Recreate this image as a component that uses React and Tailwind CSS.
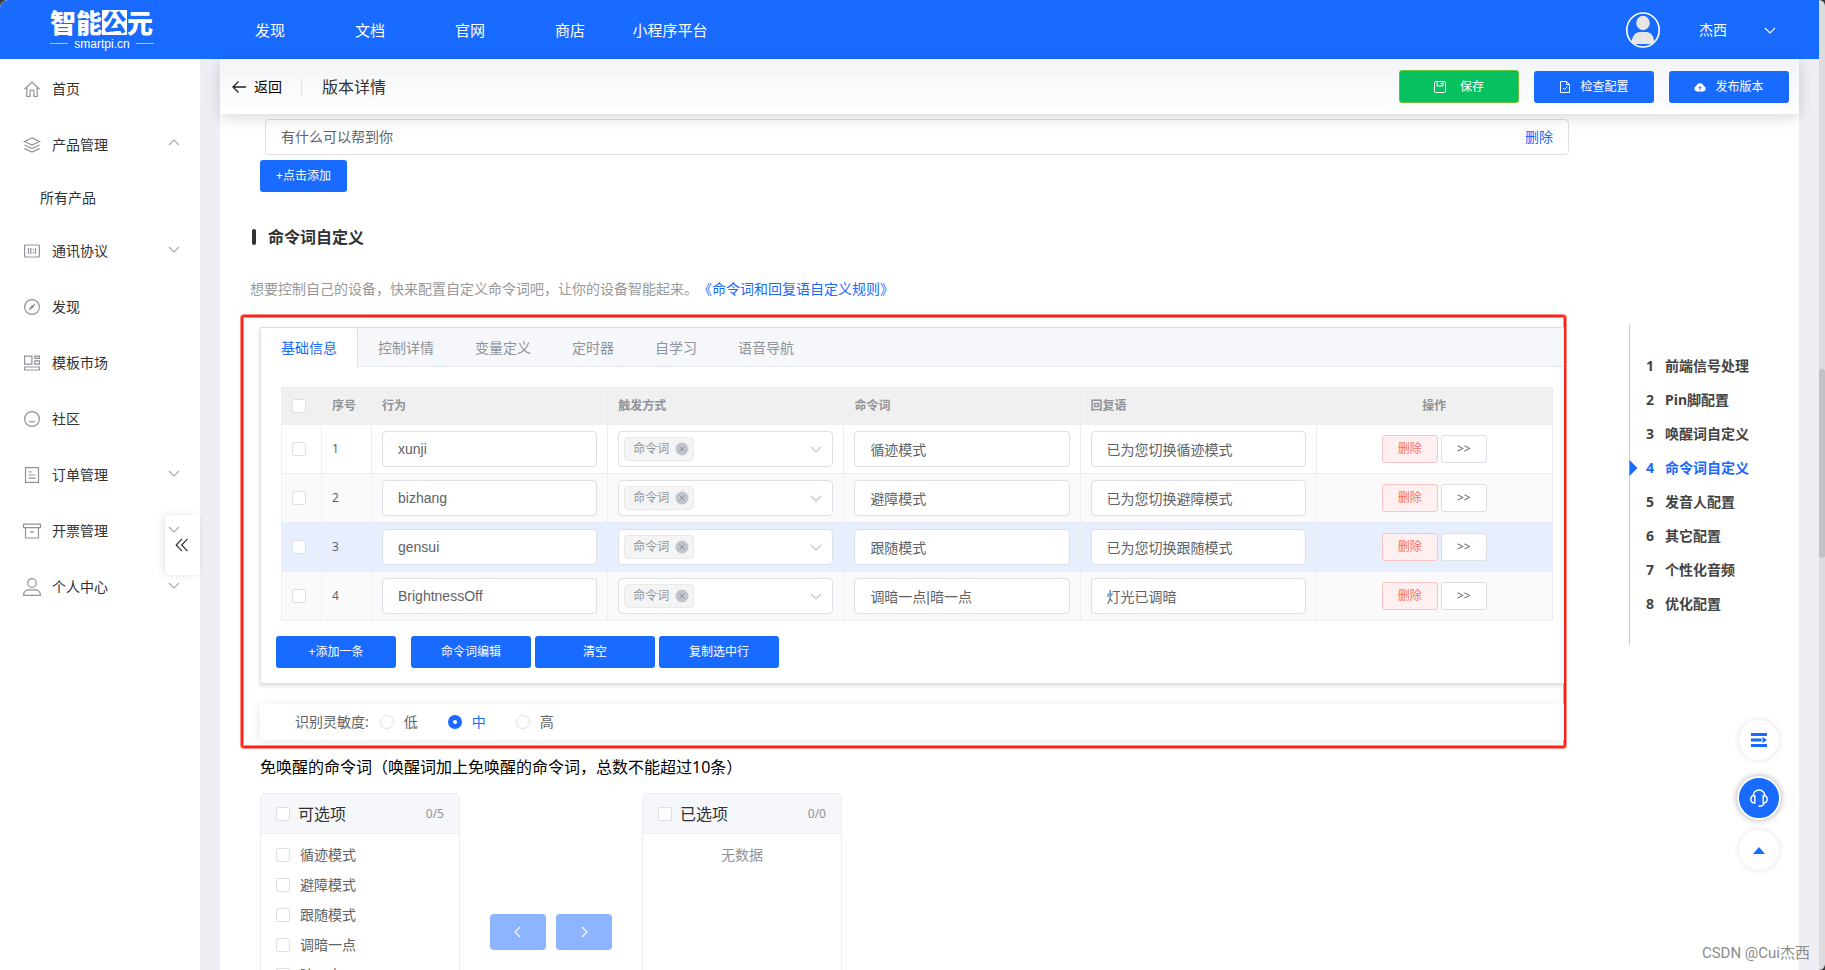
// src/App.jsx
import React, { useState } from 'react';

const topLinks = ['发现', '文档', '官网', '商店', '小程序平台'];

const sideMenu = [
  { key: 'home', label: '首页' },
  { key: 'product', label: '产品管理', arrow: 'up', children: ['所有产品'] },
  { key: 'protocol', label: '通讯协议', arrow: 'down' },
  { key: 'discover', label: '发现' },
  { key: 'market', label: '模板市场' },
  { key: 'community', label: '社区' },
  { key: 'order', label: '订单管理', arrow: 'down' },
  { key: 'invoice', label: '开票管理', arrow: 'down' },
  { key: 'user', label: '个人中心', arrow: 'down' },
];

const tabs = ['基础信息', '控制详情', '变量定义', '定时器', '自学习', '语音导航'];

const commands = [
  { action: 'xunji', words: '循迹模式', reply: '已为您切换循迹模式' },
  { action: 'bizhang', words: '避障模式', reply: '已为您切换避障模式' },
  { action: 'gensui', words: '跟随模式', reply: '已为您切换跟随模式' },
  { action: 'BrightnessOff', words: '调暗一点|暗一点', reply: '灯光已调暗' },
];

const anchors = [
  '前端信号处理',
  'Pin脚配置',
  '唤醒词自定义',
  '命令词自定义',
  '发音人配置',
  '其它配置',
  '个性化音频',
  '优化配置',
];

const levels = ['低', '中', '高'];

const wakeFree = ['循迹模式', '避障模式', '跟随模式', '调暗一点', '暗一点'];

const Chevron = ({ dir = 'down', className = '' }) => {
  const d = {
    down: 'M1 4l5 5 5-5',
    up: 'M1 8l5-5 5 5',
    left: 'M8 1L3 6l5 5',
    right: 'M4 1l5 5-5 5',
  }[dir];
  return (
    <svg viewBox="0 0 12 12" fill="none" stroke="currentColor" strokeWidth="1.1" className={className} aria-hidden="true">
      <path d={d} />
    </svg>
  );
};

// 侧边栏图标
const menuIcons = {
  home: <path d="M.5 8.200L8 1l7.500 7.200M2.800 6.800v8.700h3.200v-4.700a2 2 0 0 1 4 0v4.700h3.200V6.800" />,
  product: (
    <>
      <path d="M8 .9l7.600 3.600L8 8.100.4 4.500z" />
      <path d="M.4 8L8 11.500 15.600 8M.4 11.400L8 15l7.600-3.600" />
    </>
  ),
  protocol: (
    <>
      <rect x="0.6" y="2" width="14.8" height="12" rx="1" />
      <path d="M4.5 5v6M6.800 5v6M11.5 5v6M9.200 6v1.200M9.200 9v1.200" />
    </>
  ),
  discover: (
    <>
      <circle cx="8" cy="8" r="7.4" />
      <path d="M11.800 4.200L9 9l-4.800 2.800L7 7z" fill="currentColor" stroke="none" />
    </>
  ),
  market: (
    <path d="M.6 1.100h7.300v8H.6zM10.800 1.100h4.600v2.300h-4.600zM10.800 5.800h4.600v3.300h-4.600zM.6 12h14.800v3H.6z" />
  ),
  community: (
    <>
      <circle cx="8" cy="8" r="7.4" />
      <path d="M5.200 9.800c1.200 1.500 4.400 1.500 5.600 0" />
    </>
  ),
  order: <path d="M1.500.6h13v14.800h-13zM4.500 4.800h3M4.500 8h7M4.500 11.200h7" />,
  invoice: <path d="M-.4 1.200h16.800v3.400H-.4zM1.500 4.600h13v10.400h-13zM6 8.800h4" />,
  user: (
    <>
      <circle cx="8" cy="4" r="4.300" />
      <path d="M-.4 16.400c0-3.800 2.700-5.500 5.200-5.500h6.400c2.500 0 5.200 1.700 5.200 5.500z" />
    </>
  ),
};

const MenuIcon = ({ name }) => (
  <svg
    viewBox="0 0 16 16"
    fill="none"
    stroke="currentColor"
    strokeWidth="1.2"
    className="size-4 shrink-0 overflow-visible text-[#909399]"
    aria-hidden="true"
  >
    {menuIcons[name]}
  </svg>
);

const Checkbox = ({ label }) => (
  <input
    type="checkbox"
    aria-label={label}
    className="block size-[14px] shrink-0 appearance-none rounded-[2px] border border-[#dcdfe6] bg-white checked:border-[#196aff] checked:bg-[#196aff]"
  />
);

const BlueButton = ({ children, className = 'w-[120px]' }) => (
  <button
    type="button"
    className={`flex h-8 shrink-0 items-center justify-center rounded-[3px] bg-[#196aff] text-xs text-white ${className}`}
  >
    {children}
  </button>
);

const TextField = ({ label, value }) => (
  <input
    type="text"
    aria-label={label}
    defaultValue={value}
    className="block h-9 w-full rounded border border-[#dcdfe6] bg-white px-[15px] font-['Liberation_Sans','Noto_Sans_CJK_SC',sans-serif] text-sm text-[#606266] outline-none"
  />
);

const TriggerSelect = ({ label }) => (
  <div className="relative">
    <select
      aria-label={label}
      className="block h-9 w-full appearance-none rounded border border-[#dcdfe6] bg-white px-[15px] text-transparent outline-none"
    >
      <option>命令词</option>
    </select>
    <span className="absolute top-[6px] left-[6px] flex h-6 w-[70px] items-center gap-[6px] rounded border border-[#e9e9eb] bg-[#f4f4f5] pl-2 text-xs text-[#909399]">
      命令词
      <svg viewBox="0 0 14 14" className="size-[14px]" aria-hidden="true">
        <circle cx="7" cy="7" r="6.5" fill="#c0c4cc" />
        <path d="M4.500 4.500l5 5M9.500 4.500l-5 5" stroke="#909399" />
      </svg>
    </span>
    <Chevron className="pointer-events-none absolute top-3 right-[11px] size-3 text-[#c0c4cc]" />
  </div>
);

const Header = () => (
  <header className="flex h-[59px] shrink-0 items-center rounded-tl-lg bg-[#196aff] text-white">
    <a href="#" className="ml-[50px] flex w-[104px] shrink-0 flex-col">
      <span className="flex h-7 items-center text-[26px] leading-7 font-black whitespace-nowrap">
        智能
        <span className="block size-[25px] shrink-0 bg-white text-center text-2xl leading-6 text-[#196aff]">公</span>
        元
      </span>
      <span className="flex items-center justify-between font-['Liberation_Sans',sans-serif] text-xs leading-[14px]">
        <i className="h-px w-[18px] bg-white/60" />
        smartpi.cn
        <i className="h-px w-[18px] bg-white/60" />
      </span>
    </a>
    <nav className="ml-[66px] flex text-[15px]">
      {topLinks.map((t) => (
        <a key={t} href="#" className="w-[100px] text-center whitespace-nowrap">
          {t}
        </a>
      ))}
    </nav>
    <button type="button" className="mr-[43px] ml-auto flex items-center text-sm">
      <svg viewBox="0 0 34 36" className="h-9 w-[34px]" aria-hidden="true">
        <ellipse cx="17" cy="18" rx="16.2" ry="17" fill="none" stroke="#fff" strokeWidth="1.6" />
        <ellipse cx="17" cy="11" rx="6.8" ry="7.2" fill="#e6e6e6" />
        <path d="M5.800 30.500c0-7 4-10.500 8-10.500h6.400c4 0 8 3.500 8 10.500-1 1.400-2 1.600-3 1.600H9c-1.600 0-2.400-.6-3.200-1.600z" fill="#e6e6e6" />
      </svg>
      <span className="mr-[37px] ml-[39px]">杰西</span>
      <Chevron className="size-3" />
    </button>
  </header>
);

const Sidebar = () => (
  <aside className="relative w-[200px] shrink-0 bg-white pt-[2px] text-sm text-[#303133]">
    <div className="absolute top-[456px] right-0 h-[60px] w-[35px] rounded-l-md bg-white shadow-[-2px_0_8px_rgba(0,0,0,0.1)]" />
    <nav className="relative">
      {sideMenu.map((m) => (
        <div key={m.key}>
          <a href="#" className="flex h-14 items-center gap-3 pr-5 pl-6">
            <MenuIcon name={m.key} />
            {m.label}
            {m.arrow && <Chevron dir={m.arrow} className="mb-1 ml-auto size-3 text-[#a8abb2]" />}
          </a>
          {m.children?.map((c) => (
            <a key={c} href="#" className="flex h-[50px] items-center pl-10">
              {c}
            </a>
          ))}
        </div>
      ))}
    </nav>
    <button type="button" aria-label="收起菜单" className="absolute top-[479px] right-[11px]">
      <svg viewBox="0 0 14 14" fill="none" stroke="#303133" strokeWidth="1.2" className="size-[14px]">
        <path d="M7 .8L1.200 7 7 13.200M12.500.8L6.700 7l5.800 6.200" />
      </svg>
    </button>
  </aside>
);

const PageBar = () => (
  <div className="relative z-10 flex h-[55px] shrink-0 items-center bg-linear-to-b from-[#f3f4f7] to-white pr-[10px] pl-3 shadow-[0_3px_14px_rgba(0,0,0,0.16)]">
    <button type="button" className="flex items-center gap-2 text-sm text-black">
      <svg viewBox="0 0 14 14" fill="none" stroke="#222" strokeWidth="1.3" className="size-[14px]" aria-hidden="true">
        <path d="M14 7H1M6.500 1.500L1 7l5.500 5.500" />
      </svg>
      返回
    </button>
    <span className="mr-5 ml-[19px] h-4 w-px bg-[#dcdfe6]" />
    <h1 className="text-base text-[#303133]">版本详情</h1>
    <div className="ml-auto flex items-center gap-[15px]">
      <button
        type="button"
        className="flex h-[33px] w-[120px] items-center justify-center gap-[14px] rounded-[3px] border border-[#67c23a] bg-[#07c160] text-xs text-white"
      >
        <svg viewBox="0 0 12 12" fill="none" stroke="currentColor" className="size-3" aria-hidden="true">
          <path d="M1.500.5h9a1 1 0 0 1 1 1v9a1 1 0 0 1-1 1h-9a1 1 0 0 1-1-1v-9a1 1 0 0 1 1-1zM3 .5v4.500h6V.5M7 1.800v1.500" />
        </svg>
        保存
      </button>
      <BlueButton className="w-[120px] gap-[9px]">
        <svg viewBox="0 0 12 12" fill="none" stroke="currentColor" className="size-3" aria-hidden="true">
          <path d="M1.500.5h6l3 3v8h-9zM7.500.5v3h3M4 7l1.500 1.500L8.300 5.700" />
        </svg>
        检查配置
      </BlueButton>
      <BlueButton className="w-[120px] gap-[9px]">
        <svg viewBox="0 0 12 12" className="size-3" aria-hidden="true">
          <path d="M3 10.500a2.800 2.800 0 0 1-.6-5.500 3.700 3.700 0 0 1 7.200 0A2.800 2.800 0 0 1 9 10.500z" fill="#fff" />
          <path d="M6 9V5.800M4.600 7L6 5.600 7.400 7" fill="none" stroke="#196aff" />
        </svg>
        发布版本
      </BlueButton>
    </div>
  </div>
);

const CommandTable = () => {
  const th = 'h-[37px] border-r border-b border-[#ebeef5] px-[10px] text-left';
  const td = 'border-r border-b border-[#ebeef5] px-[10px] py-[6px]';
  return (
    <table className="w-full table-fixed border-separate border-spacing-0 border-t border-l border-[#ebeef5] text-xs text-[#606266]">
      <colgroup>
        <col className="w-10" />
        <col className="w-[50px]" />
        <col />
        <col />
        <col />
        <col />
        <col />
      </colgroup>
      <thead>
        <tr className="bg-[#f0f0f0] font-bold text-[#909399]">
          <th className={th}>
            <Checkbox label="全选" />
          </th>
          <th className={th}>序号</th>
          <th className={th}>行为</th>
          <th className={th}>触发方式</th>
          <th className={th}>命令词</th>
          <th className={th}>回复语</th>
          <th className="border-r border-b border-[#ebeef5] text-center">操作</th>
        </tr>
      </thead>
      <tbody>
        {commands.map((row, idx) => (
          <tr key={row.action} className={idx === 2 ? 'bg-[#e7effe]' : idx % 2 ? 'bg-[#fafafa]' : 'bg-white'}>
            <td className={td}>
              <Checkbox label={`选择第${idx + 1}行`} />
            </td>
            <td className={td}>{idx + 1}</td>
            <td className={td}>
              <TextField label="行为" value={row.action} />
            </td>
            <td className={td}>
              <TriggerSelect label="触发方式" />
            </td>
            <td className={td}>
              <TextField label="命令词" value={row.words} />
            </td>
            <td className={td}>
              <TextField label="回复语" value={row.reply} />
            </td>
            <td className={td}>
              <div className="flex justify-center gap-[3px]">
                <button type="button" className="h-7 w-14 rounded-[3px] border border-[#fbc4c4] bg-[#fef0f0] text-[#f56c6c]">
                  删除
                </button>
                <button type="button" className="h-7 w-[46px] rounded-[3px] border border-[#dcdfe6] bg-white">
                  &gt;&gt;
                </button>
              </div>
            </td>
          </tr>
        ))}
      </tbody>
    </table>
  );
};

const CommandCard = () => {
  const [active, setActive] = useState(0);
  return (
    <div className="border border-r-0 border-[#dcdfe6] bg-white shadow-[0_2px_4px_rgba(0,0,0,0.12),0_0_6px_rgba(0,0,0,0.04)]">
      <div role="tablist" className="flex h-[39px] border-b border-[#e4e7ed] bg-[#f5f7fa] text-sm">
        {tabs.map((t, i) => (
          <button
            key={t}
            type="button"
            role="tab"
            aria-selected={i === active}
            onClick={() => setActive(i)}
            className={`h-[39px] border-r px-5 ${
              i === active ? 'border-[#dcdfe6] bg-white text-[#196aff]' : 'border-transparent text-[#909399]'
            }`}
          >
            {t}
          </button>
        ))}
      </div>
      <div className="pt-5 pr-[11px] pl-5">
        <CommandTable />
      </div>
      <div className="flex gap-1 p-[15px]">
        <BlueButton className="mr-[11px] w-[120px]">+添加一条</BlueButton>
        <BlueButton>命令词编辑</BlueButton>
        <BlueButton>清空</BlueButton>
        <BlueButton>复制选中行</BlueButton>
      </div>
    </div>
  );
};

const Sensitivity = () => {
  const [level, setLevel] = useState('中');
  return (
    <fieldset className="mt-5 flex h-9 items-center bg-white pl-[35px] text-sm text-[#606266] shadow-[0_2px_12px_rgba(0,0,0,0.1)]">
      <span className="mr-[11px]">识别灵敏度:</span>
      {levels.map((l) => (
        <label key={l} className={`mr-[30px] flex items-center gap-[10px] ${l === level ? 'text-[#196aff]' : ''}`}>
          <input
            type="radio"
            name="sensitivity"
            checked={l === level}
            onChange={() => setLevel(l)}
            className="size-[14px] appearance-none rounded-full border border-[#dcdfe6] bg-white checked:border-[5px] checked:border-[#196aff]"
          />
          {l}
        </label>
      ))}
    </fieldset>
  );
};

const TransferPanel = ({ title, count, items }) => (
  <div className="h-[278px] w-[200px] shrink-0 rounded border border-[#ebeef5] bg-white">
    <div className="flex h-10 items-center border-b border-[#ebeef5] bg-[#f5f7fa] px-[15px]">
      <label className="flex items-center gap-2 text-base leading-5 text-[#303133]">
        <Checkbox label={title} />
        {title}
      </label>
      <span className="ml-auto text-xs text-[#909399]">{count}</span>
    </div>
    {items.length === 0 ? (
      <p className="pt-[6px] text-center text-sm leading-[30px] text-[#909399]">无数据</p>
    ) : (
      <ul className="pt-[6px]">
        {items.map((it) => (
          <li key={it}>
            <label className="flex h-[30px] items-center gap-[10px] pl-[15px] text-sm text-[#606266]">
              <Checkbox label={it} />
              {it}
            </label>
          </li>
        ))}
      </ul>
    )}
  </div>
);

const AnchorNav = () => (
  <nav className="mt-[211px] h-80 w-[170px] shrink-0 border-l border-[#c8c9cc] pt-6 text-sm font-bold text-[#444]">
    {anchors.map((a, i) => (
      <a key={a} href="#" className={`flex h-[34px] items-center ${i === 3 ? 'text-[#196aff]' : ''}`}>
        <svg viewBox="0 0 8 16" className="-ml-px h-4 w-[9px]" aria-hidden="true">
          {i === 3 && <path d="M0 0l8 8-8 8z" fill="#196aff" />}
        </svg>
        <span className="ml-2 w-[19px]">{i + 1}</span>
        {a}
      </a>
    ))}
  </nav>
);

// 右下角悬浮按钮
const FloatButtons = () => (
  <div className="absolute right-[38px] bottom-[100px] z-20 flex flex-col items-center">
    <button
      type="button"
      aria-label="展开目录"
      className="flex size-10 items-center justify-center rounded-full bg-white shadow-[0_0_6px_rgba(0,0,0,0.12)]"
    >
      <svg viewBox="0 0 16 14" fill="#196aff" className="h-[14px] w-4">
        <path d="M0 0h16v3H0zM0 5.500h10.500v3H0zM0 11h16v3H0zM11.500 4l4.500 3-4.500 3z" />
      </svg>
    </button>
    <button
      type="button"
      aria-label="客服"
      className="mt-4 flex size-11 items-center justify-center rounded-full border-2 border-white bg-[#196aff] shadow-[0_0_6px_rgba(0,0,0,0.35)]"
    >
      <svg viewBox="0 0 18 18" fill="none" stroke="#fff" strokeWidth="1.4" className="size-[18px]">
        <path d="M3 7a6 6 0 0 1 12 0M4.800 6.500v7.500c-2.600 0-4-1.500-4-3.700s1.400-3.800 4-3.800zM13.200 6.500v7.500c2.600 0 4-1.500 4-3.700s-1.400-3.800-4-3.800zM14 14c0 2-2 3.200-5.500 3.200" />
      </svg>
    </button>
    <button
      type="button"
      aria-label="返回顶部"
      className="mt-[10px] flex size-10 items-center justify-center rounded-full bg-white shadow-[0_0_6px_rgba(0,0,0,0.12)]"
    >
      <svg viewBox="0 0 12 7" fill="#196aff" className="h-[7px] w-3">
        <path d="M6 0l6 7H0z" />
      </svg>
    </button>
  </div>
);

const App = () => {
  return (
    <div
      lang="zh-CN"
      className="relative flex h-screen overflow-hidden bg-[#3a3a3a] font-['Noto_Sans','Noto_Sans_CJK_SC',sans-serif] leading-5"
    >
      <div className="relative flex min-w-0 flex-1 flex-col overflow-hidden rounded-tl-lg bg-[#edeff5]">
        <Header />
        <div className="flex min-h-0 flex-1">
          <Sidebar />
          <main className="mx-5 flex min-w-0 flex-1 flex-col bg-white">
            <PageBar />
            <div className="flex min-h-0 flex-1 gap-[60px] overflow-hidden">
              <div className="min-w-0 flex-1 pt-[5px]">
                <div className="ml-[45px] flex h-9 items-center rounded border border-[#dcdfe6] px-[15px] text-sm">
                  <input
                    type="text"
                    aria-label="回复语"
                    defaultValue="有什么可以帮到你"
                    className="min-w-0 flex-1 text-[#606266] outline-none"
                  />
                  <button type="button" className="text-[#196aff]">
                    删除
                  </button>
                </div>
                <BlueButton className="mt-[5px] ml-10 w-[87px]">+点击添加</BlueButton>

                <h2 className="mt-[33px] ml-8 flex items-center gap-3 text-base leading-6 font-bold text-[#303133]">
                  <span className="h-4 w-1 rounded-xs bg-[#303133]" />
                  命令词自定义
                </h2>
                <p className="mt-[30px] ml-[30px] text-sm leading-5 text-[#999] [text-spacing-trim:space-all]">
                  想要控制自己的设备，快来配置自定义命令词吧，让你的设备智能起来。
                  <a href="#" className="text-[#196aff]">
                    《命令词和回复语自定义规则》
                  </a>
                </p>

                <section className="mt-4 mr-[3px] ml-[21px] overflow-hidden rounded-[3px] border-2 border-[#ff2016] pt-[10px] pb-[6px] pl-[17px] shadow-[0_0_0_1px_rgba(255,32,22,0.5),inset_0_0_0_1px_rgba(255,32,22,0.5)]">
                  <CommandCard />
                  <Sensitivity />
                </section>

                <p className="mt-[7px] ml-10 text-base leading-6 text-black">
                  免唤醒的命令词（唤醒词加上免唤醒的命令词，总数不能超过10条）
                </p>
                <div className="mt-[14px] ml-10 flex items-center">
                  <TransferPanel title="可选项" count="0/5" items={wakeFree} />
                  <div className="flex gap-[10px] px-[30px]">
                    <button
                      type="button"
                      aria-label="移除"
                      className="flex h-9 w-14 items-center justify-center rounded bg-[#8cb4ff] text-white"
                    >
                      <Chevron dir="left" className="size-3" />
                    </button>
                    <button
                      type="button"
                      aria-label="添加"
                      className="flex h-9 w-14 items-center justify-center rounded bg-[#8cb4ff] text-white"
                    >
                      <Chevron dir="right" className="size-3" />
                    </button>
                  </div>
                  <TransferPanel title="已选项" count="0/0" items={[]} />
                </div>
              </div>
              <AnchorNav />
            </div>
          </main>
        </div>
        <FloatButtons />
      </div>

      <div className="w-[6px] shrink-0 rounded-r-lg bg-[#dcdde1] pt-[369px]">
        <div className="h-[189px] rounded-full bg-[#c1c2c5]" />
      </div>

      <span className="absolute right-[15px] bottom-[7px] z-30 font-['Roboto','Noto_Sans_CJK_SC',sans-serif] text-[15px] text-[#8c8c8c]">
        CSDN @Cui杰西
      </span>
    </div>
  );
};

export default App;
